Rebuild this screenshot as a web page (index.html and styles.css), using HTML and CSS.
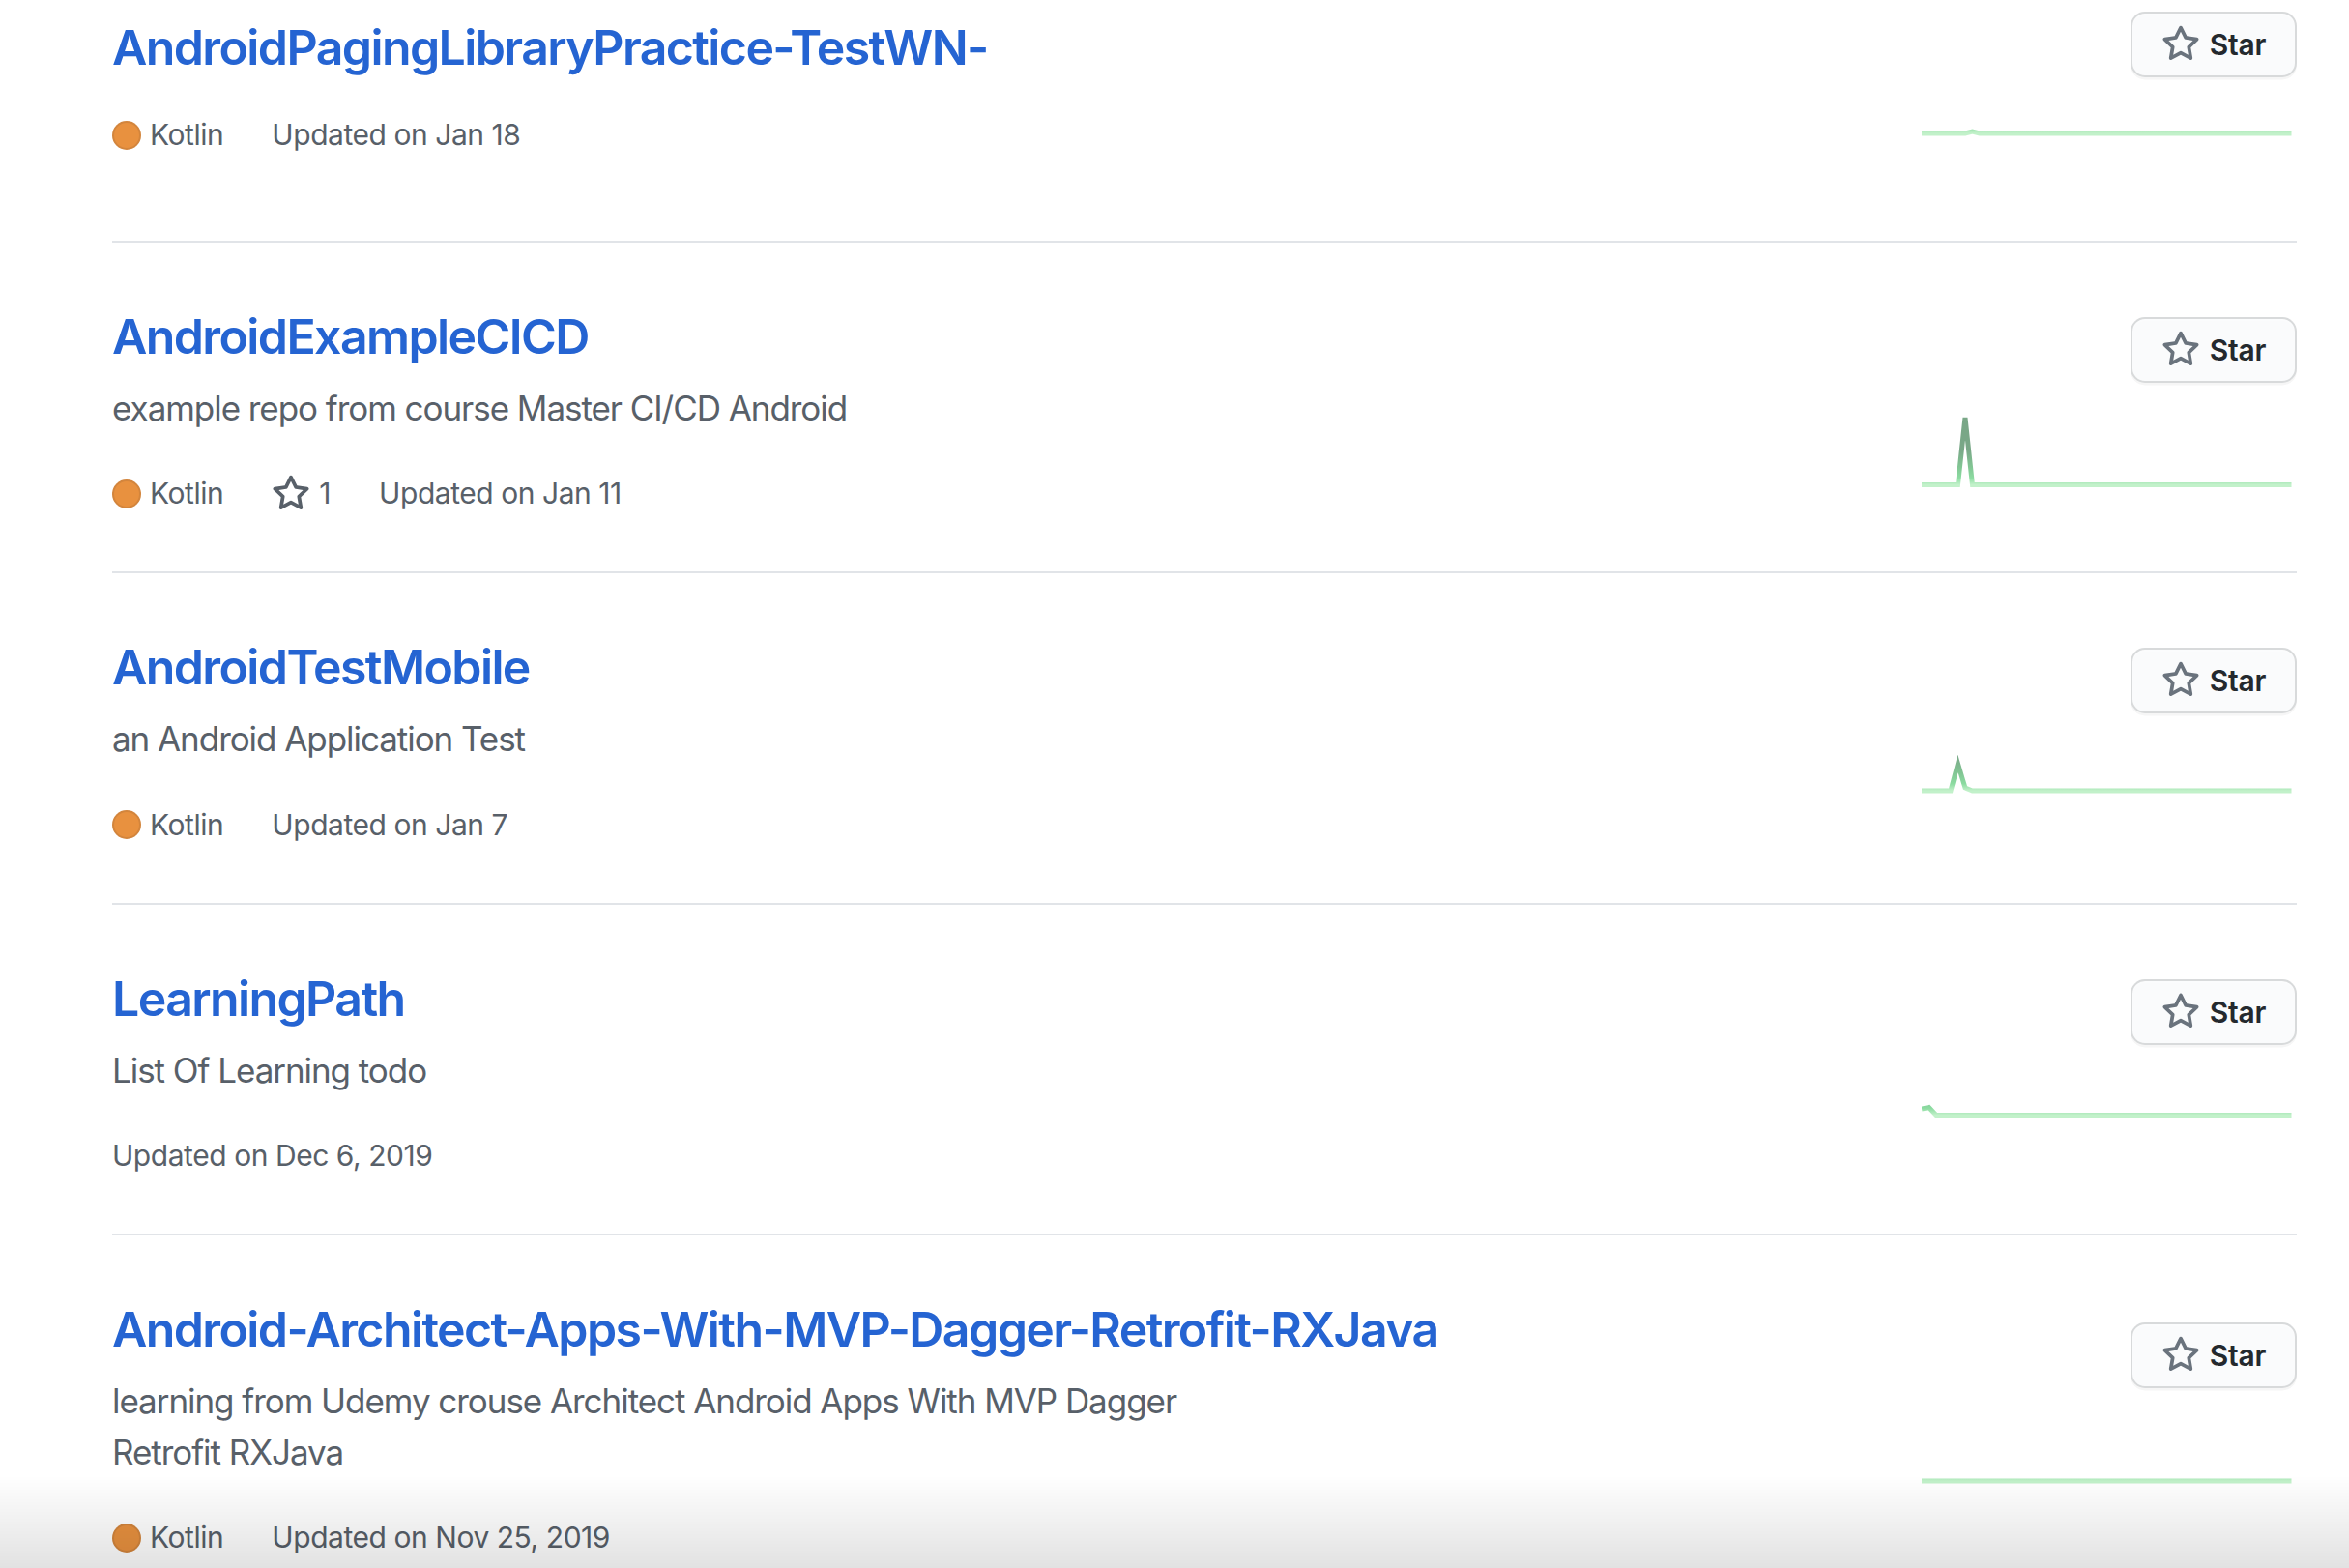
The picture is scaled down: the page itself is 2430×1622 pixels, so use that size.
FILE: index.html
```html
<!DOCTYPE html>
<html lang="en">
<head>
<meta charset="utf-8">
<title>Repositories</title>
<link rel="stylesheet" href="styles.css">
</head>
<body>
<div class="page">
  <ul class="repo-list">
    <li class="repo repo--no-desc">
      <div class="repo-main">
        <h3 class="repo-title"><a href="#">AndroidPagingLibraryPractice-TestWN-</a></h3>
        <div class="repo-meta">
          <span class="meta-item"><span class="lang-dot"></span>Kotlin</span>
          <span class="meta-item">Updated on Jan 18</span>
        </div>
      </div>
      <div class="repo-side">
        <button class="star-btn" type="button"><svg class="btn-star" viewBox="0 0 16 16" aria-hidden="true"><path d="M8 .25a.75.75 0 01.673.418l1.882 3.815 4.21.612a.75.75 0 01.416 1.279l-3.046 2.97.719 4.192a.75.75 0 01-1.088.791L8 12.347l-3.766 1.98a.75.75 0 01-1.088-.79l.72-4.194L.818 6.374a.75.75 0 01.416-1.28l4.21-.611L7.327.668A.75.75 0 018 .25zm0 2.445L6.615 5.5a.75.75 0 01-.564.41l-3.097.45 2.24 2.184a.75.75 0 01.216.664l-.528 3.084 2.769-1.456a.75.75 0 01.698 0l2.77 1.456-.53-3.084a.75.75 0 01.216-.664l2.24-2.183-3.096-.45a.75.75 0 01-.564-.41L8 2.694v.001z"/></svg>Star</button>
        <div class="spark">
          <svg width="388" height="86.5" viewBox="0 0 388 86.5">
            <defs>
              <linearGradient id="g1" gradientUnits="userSpaceOnUse" x1="0" y1="58" x2="0" y2="-14.5">
                <stop offset="0%" stop-color="#9be9a8"/><stop offset="10%" stop-color="#40c463"/><stop offset="25%" stop-color="#30a14e"/><stop offset="50%" stop-color="#216e39"/>
              </linearGradient>
              <mask id="m1" maskUnits="userSpaceOnUse" x="0" y="0" width="388" height="86.5">
                <polyline points="0,58 45,58 52.5,56 60,58 382.5,58" fill="none" stroke="#ffffff" stroke-width="5"/>
              </mask>
            </defs>
            <rect class="spark-fill" x="0" y="0" width="388" height="86.5" fill="url(#g1)" mask="url(#m1)"/>
          </svg>
        </div>
      </div>
    </li>

    <li class="repo">
      <div class="repo-main">
        <h3 class="repo-title"><a href="#">AndroidExampleCICD</a></h3>
        <p class="repo-desc">example repo from course Master CI/CD Android</p>
        <div class="repo-meta">
          <span class="meta-item"><span class="lang-dot"></span>Kotlin</span>
          <span class="meta-item"><svg class="meta-star" viewBox="0 0 16 16" aria-hidden="true"><path d="M8 .25a.75.75 0 01.673.418l1.882 3.815 4.21.612a.75.75 0 01.416 1.279l-3.046 2.97.719 4.192a.75.75 0 01-1.088.791L8 12.347l-3.766 1.98a.75.75 0 01-1.088-.79l.72-4.194L.818 6.374a.75.75 0 01.416-1.28l4.21-.611L7.327.668A.75.75 0 018 .25zm0 2.445L6.615 5.5a.75.75 0 01-.564.41l-3.097.45 2.24 2.184a.75.75 0 01.216.664l-.528 3.084 2.769-1.456a.75.75 0 01.698 0l2.77 1.456-.53-3.084a.75.75 0 01.216-.664l2.24-2.183-3.096-.45a.75.75 0 01-.564-.41L8 2.694v.001z"/></svg>1</span>
          <span class="meta-item">Updated on Jan 11</span>
        </div>
      </div>
      <div class="repo-side">
        <button class="star-btn" type="button"><svg class="btn-star" viewBox="0 0 16 16" aria-hidden="true"><path d="M8 .25a.75.75 0 01.673.418l1.882 3.815 4.21.612a.75.75 0 01.416 1.279l-3.046 2.97.719 4.192a.75.75 0 01-1.088.791L8 12.347l-3.766 1.98a.75.75 0 01-1.088-.79l.72-4.194L.818 6.374a.75.75 0 01.416-1.28l4.21-.611L7.327.668A.75.75 0 018 .25zm0 2.445L6.615 5.5a.75.75 0 01-.564.41l-3.097.45 2.24 2.184a.75.75 0 01.216.664l-.528 3.084 2.769-1.456a.75.75 0 01.698 0l2.77 1.456-.53-3.084a.75.75 0 01.216-.664l2.24-2.183-3.096-.45a.75.75 0 01-.564-.41L8 2.694v.001z"/></svg>Star</button>
        <div class="spark">
          <svg width="388" height="86.5" viewBox="0 0 388 86.5">
            <defs>
              <linearGradient id="g2" gradientUnits="userSpaceOnUse" x1="0" y1="71.5" x2="0" y2="-1">
                <stop offset="0%" stop-color="#9be9a8"/><stop offset="10%" stop-color="#40c463"/><stop offset="25%" stop-color="#30a14e"/><stop offset="50%" stop-color="#216e39"/>
              </linearGradient>
              <mask id="m2" maskUnits="userSpaceOnUse" x="0" y="0" width="388" height="86.5">
                <polyline points="0,71.5 37.5,71.5 45,2 52.5,71.5 382.5,71.5" fill="none" stroke="#ffffff" stroke-width="5"/>
              </mask>
            </defs>
            <rect class="spark-fill" x="0" y="0" width="388" height="86.5" fill="url(#g2)" mask="url(#m2)"/>
          </svg>
        </div>
      </div>
    </li>

    <li class="repo">
      <div class="repo-main">
        <h3 class="repo-title"><a href="#">AndroidTestMobile</a></h3>
        <p class="repo-desc">an Android Application Test</p>
        <div class="repo-meta">
          <span class="meta-item"><span class="lang-dot"></span>Kotlin</span>
          <span class="meta-item">Updated on Jan 7</span>
        </div>
      </div>
      <div class="repo-side">
        <button class="star-btn" type="button"><svg class="btn-star" viewBox="0 0 16 16" aria-hidden="true"><path d="M8 .25a.75.75 0 01.673.418l1.882 3.815 4.21.612a.75.75 0 01.416 1.279l-3.046 2.97.719 4.192a.75.75 0 01-1.088.791L8 12.347l-3.766 1.98a.75.75 0 01-1.088-.79l.72-4.194L.818 6.374a.75.75 0 01.416-1.28l4.21-.611L7.327.668A.75.75 0 018 .25zm0 2.445L6.615 5.5a.75.75 0 01-.564.41l-3.097.45 2.24 2.184a.75.75 0 01.216.664l-.528 3.084 2.769-1.456a.75.75 0 01.698 0l2.77 1.456-.53-3.084a.75.75 0 01.216-.664l2.24-2.183-3.096-.45a.75.75 0 01-.564-.41L8 2.694v.001z"/></svg>Star</button>
        <div class="spark">
          <svg width="388" height="86.5" viewBox="0 0 388 86.5">
            <defs>
              <linearGradient id="g3" gradientUnits="userSpaceOnUse" x1="0" y1="46" x2="0" y2="-26.5">
                <stop offset="0%" stop-color="#9be9a8"/><stop offset="10%" stop-color="#40c463"/><stop offset="25%" stop-color="#30a14e"/><stop offset="50%" stop-color="#216e39"/>
              </linearGradient>
              <mask id="m3" maskUnits="userSpaceOnUse" x="0" y="0" width="388" height="86.5">
                <polyline points="0,46 30,46 37.5,18 45,43 52.5,46 382.5,46" fill="none" stroke="#ffffff" stroke-width="5"/>
              </mask>
            </defs>
            <rect class="spark-fill" x="0" y="0" width="388" height="86.5" fill="url(#g3)" mask="url(#m3)"/>
          </svg>
        </div>
      </div>
    </li>

    <li class="repo">
      <div class="repo-main">
        <h3 class="repo-title"><a href="#">LearningPath</a></h3>
        <p class="repo-desc">List Of Learning todo</p>
        <div class="repo-meta">
          <span class="meta-item">Updated on Dec 6, 2019</span>
        </div>
      </div>
      <div class="repo-side">
        <button class="star-btn" type="button"><svg class="btn-star" viewBox="0 0 16 16" aria-hidden="true"><path d="M8 .25a.75.75 0 01.673.418l1.882 3.815 4.21.612a.75.75 0 01.416 1.279l-3.046 2.97.719 4.192a.75.75 0 01-1.088.791L8 12.347l-3.766 1.98a.75.75 0 01-1.088-.79l.72-4.194L.818 6.374a.75.75 0 01.416-1.28l4.21-.611L7.327.668A.75.75 0 018 .25zm0 2.445L6.615 5.5a.75.75 0 01-.564.41l-3.097.45 2.24 2.184a.75.75 0 01.216.664l-.528 3.084 2.769-1.456a.75.75 0 01.698 0l2.77 1.456-.53-3.084a.75.75 0 01.216-.664l2.24-2.183-3.096-.45a.75.75 0 01-.564-.41L8 2.694v.001z"/></svg>Star</button>
        <div class="spark">
          <svg width="388" height="86.5" viewBox="0 0 388 86.5">
            <defs>
              <linearGradient id="g4" gradientUnits="userSpaceOnUse" x1="0" y1="38.5" x2="0" y2="-34">
                <stop offset="0%" stop-color="#9be9a8"/><stop offset="10%" stop-color="#40c463"/><stop offset="25%" stop-color="#30a14e"/><stop offset="50%" stop-color="#216e39"/>
              </linearGradient>
              <mask id="m4" maskUnits="userSpaceOnUse" x="0" y="0" width="388" height="86.5">
                <polyline points="0,32 7.5,30.5 15,38.5 382.5,38.5" fill="none" stroke="#ffffff" stroke-width="5"/>
              </mask>
            </defs>
            <rect class="spark-fill" x="0" y="0" width="388" height="86.5" fill="url(#g4)" mask="url(#m4)"/>
          </svg>
        </div>
      </div>
    </li>

    <li class="repo">
      <div class="repo-main">
        <h3 class="repo-title"><a href="#">Android-Architect-Apps-With-MVP-Dagger-Retrofit-RXJava</a></h3>
        <p class="repo-desc">learning from Udemy crouse Architect Android Apps With MVP Dagger Retrofit RXJava</p>
        <div class="repo-meta">
          <span class="meta-item"><span class="lang-dot"></span>Kotlin</span>
          <span class="meta-item">Updated on Nov 25, 2019</span>
        </div>
      </div>
      <div class="repo-side">
        <button class="star-btn" type="button"><svg class="btn-star" viewBox="0 0 16 16" aria-hidden="true"><path d="M8 .25a.75.75 0 01.673.418l1.882 3.815 4.21.612a.75.75 0 01.416 1.279l-3.046 2.97.719 4.192a.75.75 0 01-1.088.791L8 12.347l-3.766 1.98a.75.75 0 01-1.088-.79l.72-4.194L.818 6.374a.75.75 0 01.416-1.28l4.21-.611L7.327.668A.75.75 0 018 .25zm0 2.445L6.615 5.5a.75.75 0 01-.564.41l-3.097.45 2.24 2.184a.75.75 0 01.216.664l-.528 3.084 2.769-1.456a.75.75 0 01.698 0l2.77 1.456-.53-3.084a.75.75 0 01.216-.664l2.24-2.183-3.096-.45a.75.75 0 01-.564-.41L8 2.694v.001z"/></svg>Star</button>
        <div class="spark">
          <svg width="388" height="86.5" viewBox="0 0 388 86.5">
            <defs>
              <linearGradient id="g5" gradientUnits="userSpaceOnUse" x1="0" y1="36" x2="0" y2="-36.5">
                <stop offset="0%" stop-color="#9be9a8"/><stop offset="10%" stop-color="#40c463"/><stop offset="25%" stop-color="#30a14e"/><stop offset="50%" stop-color="#216e39"/>
              </linearGradient>
              <mask id="m5" maskUnits="userSpaceOnUse" x="0" y="0" width="388" height="86.5">
                <polyline points="0,36 382.5,36" fill="none" stroke="#ffffff" stroke-width="5"/>
              </mask>
            </defs>
            <rect class="spark-fill" x="0" y="0" width="388" height="86.5" fill="url(#g5)" mask="url(#m5)"/>
          </svg>
        </div>
      </div>
    </li>
  </ul>
</div>
<div class="fade"></div>
</body>
</html>
```

FILE: styles.css
```css
html, body {
  margin: 0;
  padding: 0;
  background: #ffffff;
  height: 100%;
  overflow: hidden;
}

body {
  font-family: Inter, "Liberation Sans", Arial, sans-serif;
  color: #24292e;
}

.page {
  padding: 0 54px 0 116px;
}

.repo-list {
  list-style: none;
  margin: -48px 0 0;
  padding: 0;
}

.repo {
  display: flex;
  justify-content: space-between;
  padding: 60px 0 58px;
  border-bottom: 2px solid #e1e4e8;
}

.repo--no-desc {
  padding-bottom: 82px;
}

.repo-main {
  flex: 1 1 auto;
  min-width: 0;
  display: flex;
  flex-direction: column;
  align-items: flex-start;
}

.repo-title {
  margin: 0 0 10px;
  font-size: 50px;
  line-height: 75px;
  font-weight: 600;
  letter-spacing: -1.6px;
}

.repo-title a {
  color: #2564d2;
  text-decoration: none;
}

.repo-desc {
  margin: 0 0 20px;
  max-width: 1150px;
  font-size: 35px;
  line-height: 52.5px;
  letter-spacing: -1.05px;
  color: #586069;
}

.repo-meta {
  display: flex;
  align-items: center;
  margin-top: 20px;
  height: 45px;
  font-size: 30px;
  line-height: 45px;
  letter-spacing: -0.45px;
  color: #586069;
}

.meta-item {
  display: inline-flex;
  align-items: center;
  margin-right: 50px;
}

.lang-dot {
  width: 30px;
  height: 30px;
  box-sizing: border-box;
  border-radius: 50%;
  background: #e8913f;
  border: 2px solid rgba(27, 31, 35, 0.1);
  margin-right: 9px;
}

.meta-star {
  width: 40px;
  height: 40px;
  margin-right: 9px;
  fill: #586069;
}

.repo-side {
  flex: 0 0 auto;
  display: flex;
  flex-direction: column;
  justify-content: space-around;
  align-items: flex-end;
  margin-left: 40px;
}

.star-btn {
  display: inline-flex;
  align-items: center;
  height: 68px;
  padding: 0 30px;
  border: 2.5px solid rgba(27, 31, 35, 0.15);
  border-radius: 15px;
  background: #fafbfc;
  color: #24292e;
  font-family: Inter, "Liberation Sans", Arial, sans-serif;
  font-size: 30px;
  font-weight: 600;
  letter-spacing: -0.3px;
  box-shadow: 0 2.5px 0 rgba(27, 31, 35, 0.04), inset 0 2.5px 0 rgba(255, 255, 255, 0.25);
  cursor: pointer;
}

.btn-star {
  width: 40px;
  height: 40px;
  margin-right: 10px;
  fill: #6a737d;
}

.spark {
  width: 388px;
  height: 86.5px;
}

.spark svg {
  display: block;
}

.spark-fill {
  opacity: 0.6;
}

.fade {
  position: fixed;
  left: 0;
  right: 0;
  bottom: 0;
  height: 96px;
  background: linear-gradient(to bottom, rgba(0, 0, 0, 0), rgba(0, 0, 0, 0.115));
  pointer-events: none;
}
```
